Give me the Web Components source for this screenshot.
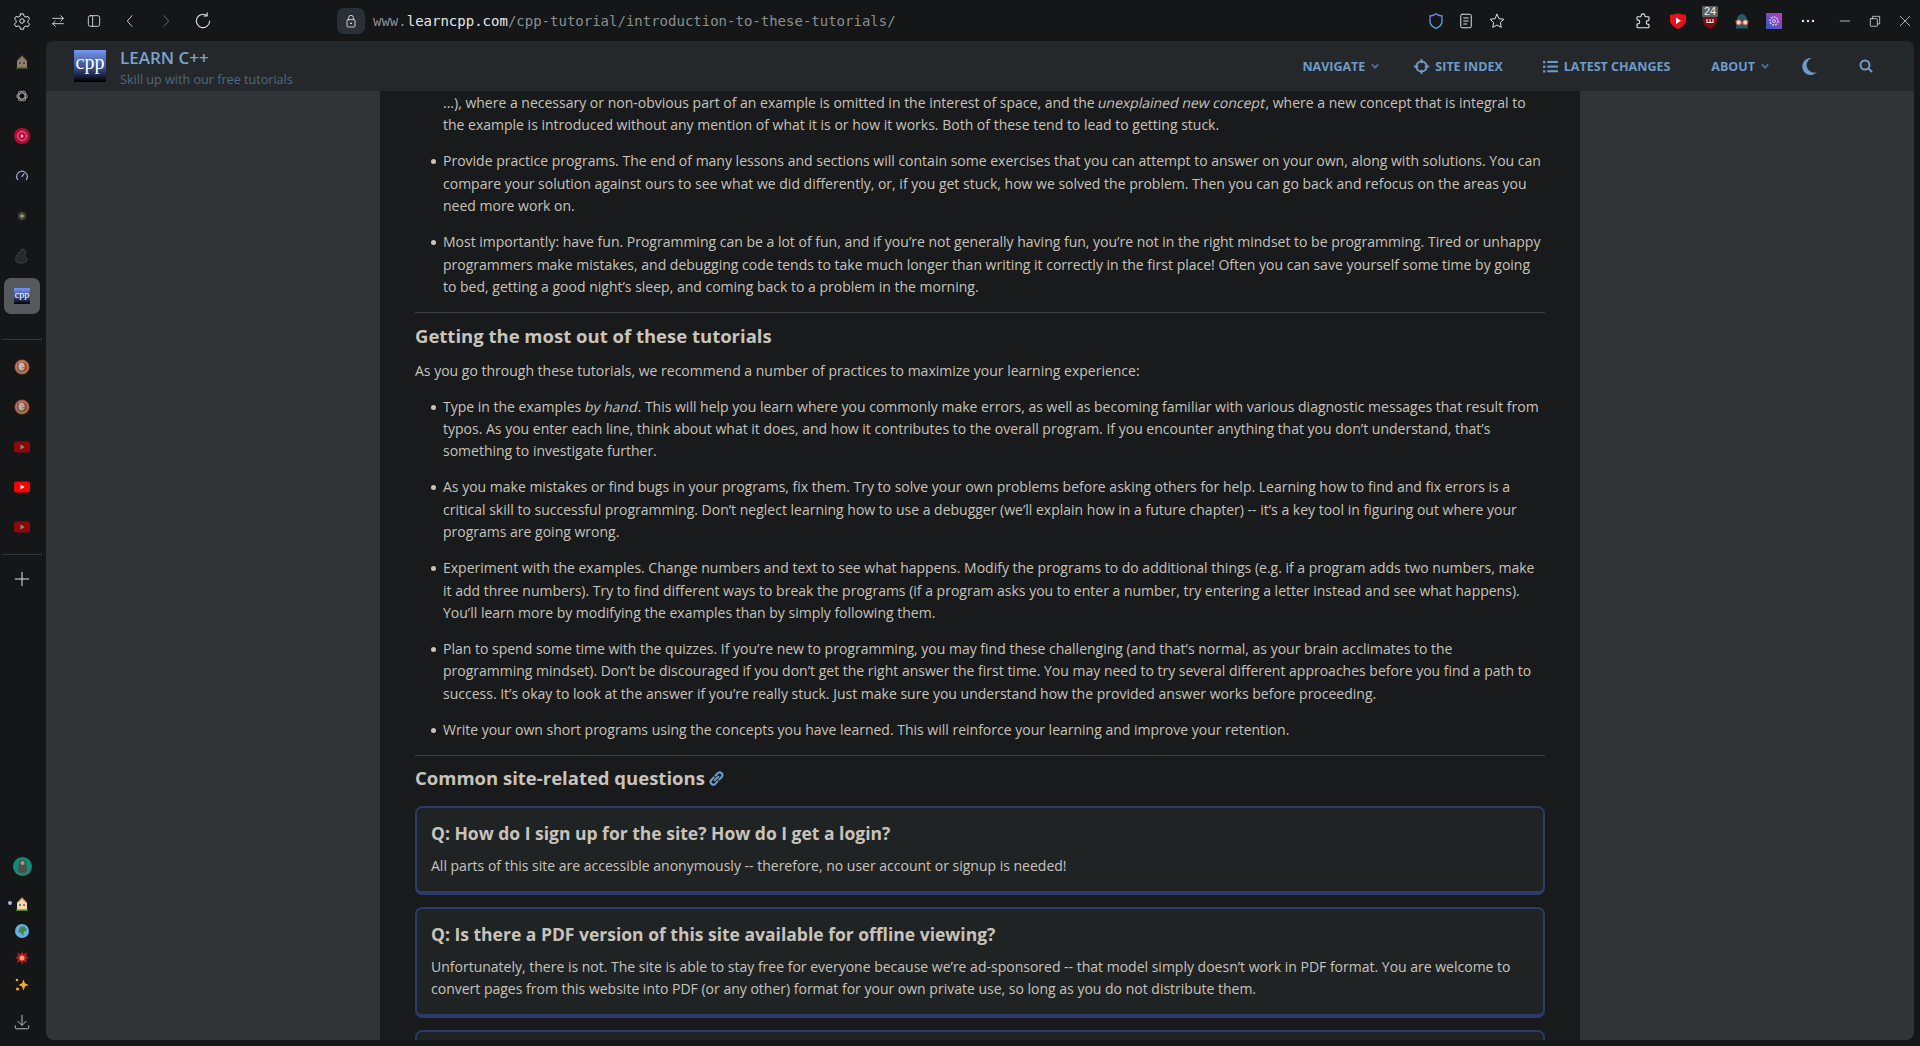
<!DOCTYPE html>
<html>
<head>
<meta charset="utf-8">
<title>Introduction to these tutorials</title>
<style>
html, body { margin: 0; height: 100%; overflow: hidden; background: #141617; }
body { font-family: "Open Sans", "Noto Sans", sans-serif; }
</style>
</head>
<body>
<browser-window>
    <browser-toolbar slot="toolbar"></browser-toolbar>
    <side-rail slot="rail"></side-rail>
    <site-header slot="header"></site-header>
    <tut-article>
        <tut-item continued>...), where a necessary or non-obvious part of an example is omitted in the interest of space, and the <tut-em>unexplained new concept</tut-em>, where a new concept that is integral to the example is introduced without any mention of what it is or how it works. Both of these tend to lead to getting stuck.</tut-item>
        <tut-item>Provide practice programs. The end of many lessons and sections will contain some exercises that you can attempt to answer on your own, along with solutions. You can compare your solution against ours to see what we did differently, or, if you get stuck, how we solved the problem. Then you can go back and refocus on the areas you need more work on.</tut-item>
        <tut-item>Most importantly: have fun. Programming can be a lot of fun, and if you’re not generally having fun, you’re not in the right mindset to be programming. Tired or unhappy programmers make mistakes, and debugging code tends to take much longer than writing it correctly in the first place! Often you can save yourself some time by going to bed, getting a good night’s sleep, and coming back to a problem in the morning.</tut-item>
        <tut-heading>Getting the most out of these tutorials</tut-heading>
        <tut-para>As you go through these tutorials, we recommend a number of practices to maximize your learning experience:</tut-para>
        <tut-item>Type in the examples <tut-em>by hand</tut-em>. This will help you learn where you commonly make errors, as well as becoming familiar with various diagnostic messages that result from typos. As you enter each line, think about what it does, and how it contributes to the overall program. If you encounter anything that you don’t understand, that’s something to investigate further.</tut-item>
        <tut-item>As you make mistakes or find bugs in your programs, fix them. Try to solve your own problems before asking others for help. Learning how to find and fix errors is a critical skill to successful programming. Don’t neglect learning how to use a debugger (we’ll explain how in a future chapter) -- it’s a key tool in figuring out where your programs are going wrong.</tut-item>
        <tut-item>Experiment with the examples. Change numbers and text to see what happens. Modify the programs to do additional things (e.g. if a program adds two numbers, make it add three numbers). Try to find different ways to break the programs (if a program asks you to enter a number, try entering a letter instead and see what happens). You’ll learn more by modifying the examples than by simply following them.</tut-item>
        <tut-item>Plan to spend some time with the quizzes. If you’re new to programming, you may find these challenging (and that’s normal, as your brain acclimates to the programming mindset). Don’t be discouraged if you don’t get the right answer the first time. You may need to try several different approaches before you find a path to success. It’s okay to look at the answer if you’re really stuck. Just make sure you understand how the provided answer works before proceeding.</tut-item>
        <tut-item>Write your own short programs using the concepts you have learned. This will reinforce your learning and improve your retention.</tut-item>
        <tut-heading anchor>Common site-related questions</tut-heading>
        <qa-card question="Q: How do I sign up for the site? How do I get a login?">All parts of this site are accessible anonymously -- therefore, no user account or signup is needed!</qa-card>
        <qa-card question="Q: Is there a PDF version of this site available for offline viewing?">Unfortunately, there is not. The site is able to stay free for everyone because we’re ad-sponsored -- that model simply doesn’t work in PDF format. You are welcome to convert pages from this website into PDF (or any other) format for your own private use, so long as you do not distribute them.</qa-card>
        <qa-card></qa-card>
    </tut-article>
</browser-window>

<script>
const FONT = '"Open Sans", "Noto Sans", sans-serif';

// stroke icon helper, everything in the chrome is a 1.3px outline
const line = (size, body, color = "#e4e4e4", sw = 1.3) => `<svg width="${size}" height="${size}" viewBox="0 0 24 24" fill="none" stroke="${color}" stroke-width="${sw}" stroke-linecap="round" stroke-linejoin="round">${body}</svg>`;

const ICONS = {
    gear: '<circle cx="12" cy="12" r="3"/><path d="M10 2.5h4l.7 3 2.4 1.3 3-.9 2 3.4-2.2 2.1v2.6l2.2 2.2-2 3.4-3-.9-2.4 1.3-.7 3h-4l-.7-3-2.4-1.3-3 .9-2-3.4 2.2-2.2v-2.6L2 9.3l2-3.4 3 .9 2.4-1.3z"/>',
    swap: '<path d="M4 8h16M16 4l4 4-4 4M20 16H4M8 12l-4 4 4 4"/>',
    panel: '<rect x="3.5" y="4" width="17" height="16" rx="3"/><path d="M10 4v16"/>',
    back: '<path d="M15 4l-7 8 7 8"/>',
    forward: '<path d="M9 4l7 8-7 8"/>',
    reload: '<path d="M20 12a8 8 0 1 1-3-6.3M17 2v4h-4"/>',
    lock: '<rect x="6" y="10" width="12" height="11" rx="1.5"/><path d="M8.5 10V7a3.5 3.5 0 0 1 7 0v3"/><circle cx="12" cy="15.5" r=".8" fill="#e4e4e4"/>',
    reader: '<rect x="5" y="3" width="14" height="18" rx="2"/><path d="M9 8h6M9 12h6M9 16h4"/>',
    star: '<path d="M12 3l2.800 5.900 6.400.8-4.700 4.400 1.200 6.400-5.700-3.100-5.700 3.100 1.200-6.400-4.700-4.400 6.400-.8z"/>',
    puzzle: '<path d="M9.500 5a2.500 2.500 0 0 1 5 0c0 .8.5 1.300 1.200 1.300H19a1 1 0 0 1 1 1v3c0 .7-.5 1.200-1.200 1.200a2.500 2.500 0 0 0 0 5c.7 0 1.200.5 1.200 1.200V20a1 1 0 0 1-1 1H5a1 1 0 0 1-1-1v-3c0-.7.5-1.200 1.200-1.200a2.500 2.500 0 0 0 0-5c-.7 0-1.200-.5-1.200-1.200V7.300a1 1 0 0 1 1-1h3.300c.7 0 1.200-.5 1.200-1.300z"/>',
    plus: '<path d="M12 3v18M3 12h18"/>',
    download: '<path d="M12 3v13M6.500 11l5.500 5.500 5.500-5.500M3 17v2.500c0 1 .5 1.500 1.500 1.500h15c1 0 1.500-.5 1.500-1.500V17"/>'
};

// the favicons and extension badges are small coloured drawings
const cppLogo = (size, id) => `<svg width="${size}" height="${size}" viewBox="0 0 32 32"><defs><linearGradient id="${id}" x1="0" y1="0" x2="0" y2="1"><stop offset="0" stop-color="#7597f0"/><stop offset=".6" stop-color="#35467f"/><stop offset="1" stop-color="#000"/></linearGradient></defs><rect width="32" height="32" fill="url(#${id})"/><text x="16" y="19" text-anchor="middle" font-family="'Liberation Serif', serif" font-size="20" fill="#fff">cpp</text></svg>`;
const house = (size, dim) => `<svg width="${size}" height="${size}" viewBox="0 0 16 16" style="opacity:${dim}"><path d="M8 1.500l5 5V14H3V6.500z" fill="#f2d9a8"/><path d="M8 1.500l5 5h-1.500L8 3 4.500 6.500H3z" fill="#c9895a"/><rect x="5" y="8" width="2" height="2" fill="#4a86d8"/><rect x="9" y="8" width="2" height="2" fill="#e05050"/><rect x="2" y="13.500" width="12" height="1.500" fill="#4f7a30"/></svg>`;
const duck = (dim) => `<svg width="16" height="16" viewBox="0 0 16 16" style="opacity:${dim}"><circle cx="8" cy="8" r="7.500" fill="#d5603a"/><circle cx="8" cy="8" r="6" fill="none" stroke="#f4ddd4" stroke-width=".8"/><ellipse cx="7.500" cy="7.500" rx="3" ry="4" fill="#eee"/><path d="M8 8h3v1.400H8z" fill="#e8a530"/><path d="M6 11.500h4l-1 2H7z" fill="#5aa845"/></svg>`;
const yt = (dim) => `<svg width="16" height="12" viewBox="0 0 16 12" style="opacity:${dim}"><rect width="16" height="11" y=".5" rx="2.500" fill="#f00"/><path d="M6.500 3.500l4 2.500-4 2.500z" fill="#fff"/></svg>`;

const RAIL_ITEMS = [
    [34, house(16, .55)],
    [34, `<svg width="16" height="16" viewBox="0 0 24 24" fill="none" stroke="#9a9a9a" stroke-width="1.600"><circle cx="12" cy="12" r="11" fill="#0e0e0e" stroke="none"/><ellipse cx="12" cy="12" rx="8" ry="4.500"/><ellipse cx="12" cy="12" rx="8" ry="4.500" transform="rotate(60 12 12)"/><ellipse cx="12" cy="12" rx="8" ry="4.500" transform="rotate(120 12 12)"/></svg>`],
    [3, ""],
    [40, `<svg width="16" height="16" viewBox="0 0 16 16"><circle cx="8" cy="8" r="8" fill="#b70c38"/><circle cx="8" cy="8" r="4.500" fill="none" stroke="#e88ba4" stroke-width=".9"/><path d="M6.800 5.800l3.200 2.200-3.200 2.200z" fill="#e8c0cc"/></svg>`],
    [40, `<svg width="14" height="14" viewBox="0 0 16 16" fill="none" stroke="#a9a9c0" stroke-width="1.400" stroke-linecap="round"><circle cx="8" cy="8" r="8" fill="#181a26" stroke="none"/><path d="M3 12a6 6 0 1 1 10 0M8 8.500l2.200-3"/></svg>`],
    [40, `<svg width="8" height="8" viewBox="0 0 8 8"><circle cx="4" cy="4" r="4" fill="#4a4433"/><circle cx="4" cy="4" r="1.800" fill="#9a9a8a"/></svg>`],
    [40, `<svg width="14" height="16" viewBox="0 0 14 16" fill="#26292c" stroke="#44474a" stroke-width=".8"><path d="M1 13c-1-4 1-7 4-9l2-3 3 1 1 3-2 2 3 4c0 3-2 4-5 4s-5 0-6-2z"/></svg>`],
    [40, cppLogo(16, "cr"), true],
];
const RAIL_DUCKS = [
    [40, duck(.75)],
    [40, duck(.7)],
    [40, yt(.5)],
    [40, yt(1)],
    [40, yt(.5)],
];
const RAIL_BOTTOM = [
    [36, `<svg width="19" height="19" viewBox="0 0 19 19"><circle cx="9.500" cy="9.500" r="9.500" fill="#148a78"/><path d="M6 5c1-3 6-3 7 0l1 9c-1 3-8 3-9 0z" fill="#4b4f48"/><circle cx="9.500" cy="6" r="2" fill="#a89a88"/></svg>`],
    [6, ""],
    [27, house(16, 1), false, true],
    [27, `<svg width="14" height="14" viewBox="0 0 14 14"><circle cx="7" cy="7" r="7" fill="#6aaee8"/><path d="M5 3l4-1 3 4-3 2-1 4-2-3-3-1z" fill="#3f8a45"/></svg>`],
    [27, `<svg width="14" height="14" viewBox="0 0 14 14"><path d="M7 0l1.500 3.500L12 1l-1 4 3 2-3 1 1 4-3.500-2L7 14 5.500 10 2 12l1-4-3-1 3-2-1-4 3.500 2.500z" fill="#b8182c"/><circle cx="7" cy="7" r="2.500" fill="#f2a84a"/></svg>`],
    [27, `<svg width="14" height="14" viewBox="0 0 14 14" fill="#f4a92c"><path d="M8.500 1.500l1.500 3.700L13.500 7 10 8.500l-1.500 4-1.500-4L3.500 7 7 5.200z"/><circle cx="2" cy="2" r="1.300"/><circle cx="2.500" cy="11" r="1.600"/></svg>`],
];

class BrowserWindow extends HTMLElement {
    constructor() {
        super();
        this.attachShadow({ mode: "open" }).innerHTML = `
            <style>
            :host { display: grid; grid-template-columns: 46px 1fr; grid-template-rows: 41px 1005px; height: 1046px; background: #141617; color: #c8c3bc; }
            .bar { grid-column: 1 / 3; }
            .panel { display: grid; grid-template-columns: 334px 1200px 334px; grid-template-rows: 50px 949px; border-radius: 8px; overflow: hidden; background: #303437; margin: 0 6px 6px 0; min-height: 0; }
            .head { grid-column: 1 / 4; }
            .main { grid-column: 2; background: #181a1b; overflow: hidden; min-height: 0; }
            </style>
            <div class="bar"><slot name="toolbar"></slot></div>
            <slot name="rail"></slot>
            <div class="panel">
                <div class="head"><slot name="header"></slot></div>
                <div class="main"><slot></slot></div>
            </div>`;
    }
}

class BrowserToolbar extends HTMLElement {
    constructor() {
        super();
        const btn = (name, w = 36, color, sw, size = 16) => `<span class="b" style="width:${w}px">${line(size, ICONS[name], color, sw)}</span>`;
        this.attachShadow({ mode: "open" }).innerHTML = `
            <style>
            :host { display: flex; align-items: center; height: 41px; padding-left: 4px; box-sizing: border-box; }
            .b { display: flex; justify-content: center; align-items: center; height: 26px; flex: none; }
            .lock { width: 28px; height: 26px; margin-left: 115px; background: #2a3038; border-radius: 7px; display: flex; align-items: center; justify-content: center; }
            .url { font: 14px "DejaVu Sans Mono", monospace; color: #8b8f92; margin-left: 8px; white-space: nowrap; }
            .url b { font-weight: 400; color: #e8e8e8; }
            .fill { flex: 1; }
            .ext { position: relative; width: 32px; display: flex; justify-content: center; align-items: center; flex: none; }
            .count { position: absolute; top: -7px; left: 8px; background: #5c5f62; color: #eee; font: 11px/11px "Liberation Sans", sans-serif; padding: 0 2px; border-radius: 1px; }
            .win { width: 30px; display: flex; justify-content: center; flex: none; }
            </style>
            ${btn("gear", 36, undefined, undefined, 18)}${btn("swap")}${btn("panel")}${btn("back")}${btn("forward", 36, "#6e7072")}${btn("reload", 38, undefined, undefined, 20)}
            <span class="lock">${line(16, ICONS.lock)}</span>
            <span class="url">www.<b>learncpp.com</b>/cpp-tutorial/introduction-to-these-tutorials/</span>
            <span style="width:525px;flex:none"></span>
            <span class="b" style="width:30px"><svg width="18" height="18" viewBox="0 0 24 24" fill="none" stroke="url(#sg)" stroke-width="1.800"><defs><linearGradient id="sg" x1="0" y1="0" x2="0" y2="1"><stop offset="0" stop-color="#7a78e0"/><stop offset="1" stop-color="#3fb4ec"/></linearGradient></defs><path d="M12 2.500c2.500 1.700 5 2.500 8 2.800v7c0 4.300-3.200 7.500-8 9.500-4.800-2-8-5.200-8-9.500v-7c3-.3 5.500-1.100 8-2.800z"/></svg></span>
            ${btn("reader", 30, undefined, undefined, 18)}${btn("star", 32, undefined, undefined, 18)}
            <span class="fill"></span>
            ${btn("puzzle", 32, undefined, 1.500, 18)}
            <span style="width:3px;flex:none"></span>
            <span class="ext"><svg width="16" height="16" viewBox="0 0 16 16"><path d="M8 0c2 1.200 5 1.500 8 1.800V7c0 4-3.500 7-8 9-4.500-2-8-5-8-9V1.800C3 1.500 6 1.200 8 0z" fill="#e8101c"/><path d="M6 4.500l5 3.300-5 3.300z" fill="#fff"/></svg></span>
            <span class="ext"><svg width="14" height="16" viewBox="0 0 14 16"><path d="M7 0l7 2v6c0 3.500-3 6.200-7 8-4-1.800-7-4.500-7-8V2z" fill="#7c0d10"/><path d="M4 6v3.500h6V6M7 6v3.500" fill="none" stroke="#eee" stroke-width="1.100"/></svg><span class="count">24</span></span>
            <span class="ext"><svg width="16" height="18" viewBox="0 0 17 18"><path d="M3 9c0-10 11-10 11 0l1 8H2z" fill="#1f5a68"/><rect x="1" y="8" width="15" height="2" fill="#3a3a3a"/><circle cx="5" cy="10.500" r="2.800" fill="#e8d8c8" stroke="#c8402c"/><circle cx="12" cy="10.500" r="2.800" fill="#e8d8c8" stroke="#c8402c"/></svg></span>
            <span class="ext"><svg width="16" height="16" viewBox="0 0 16 16"><defs><linearGradient id="pg" x1="1" y1="0" x2="0" y2="1"><stop offset="0" stop-color="#c03ab8"/><stop offset="1" stop-color="#2b5cc0"/></linearGradient></defs><rect width="16" height="16" fill="url(#pg)"/><circle cx="8" cy="8" r="4" fill="none" stroke="#d8c8f0" stroke-width="1.400" stroke-dasharray="2 1"/><circle cx="8" cy="8" r="1.500" fill="none" stroke="#d8c8f0"/></svg></span>
            <span class="ext" style="width:36px"><svg width="14" height="4" viewBox="0 0 14 4" fill="#e4e4e4"><circle cx="2" cy="2" r="1.200"/><circle cx="7" cy="2" r="1.200"/><circle cx="12" cy="2" r="1.200"/></svg></span>
            <span style="width:4px;flex:none"></span>
            <span class="win">${line(14, '<path d="M4 12h16"/>')}</span>
            <span class="win">${line(14, '<rect x="4" y="8" width="12" height="13" rx="1"/><path d="M8 8V4h12v13h-4"/>')}</span>
            <span class="win">${line(14, '<path d="M4 4l16 16M20 4L4 20"/>')}</span>`;
    }
}

class SideRail extends HTMLElement {
    constructor() {
        super();
        const item = ([h, svg, active, dot]) => `<div class="it" style="height:${h}px">${active ? '<span class="on"></span>' : ""}${dot ? '<span class="dot"></span>' : ""}${svg}</div>`;
        this.attachShadow({ mode: "open" }).innerHTML = `
            <style>
            :host { display: flex; flex-direction: column; width: 46px; padding: 4px 2px 0 0; box-sizing: border-box; height: 999px; }
            .it { position: relative; display: flex; align-items: center; justify-content: center; flex: none; }
            .it svg { position: relative; }
            .on { position: absolute; left: 4px; top: 2px; width: 36px; height: 36px; border-radius: 7px; background: #56595b; }
            .dot { position: absolute; left: 8px; top: 11px; width: 4px; height: 4px; border-radius: 50%; background: #9db8f4; }
            .sep { height: 1px; background: #33363a; margin: 23px 2px 7px; flex: none; }
            .sep.low { margin: 7px 2px 0; }
            .add { height: 48px; display: flex; align-items: center; justify-content: center; flex: none; }
            .fill { flex: 1; }
            .dl { height: 42px; box-sizing: border-box; padding-bottom: 9px; display: flex; align-items: flex-end; justify-content: center; flex: none; }
            </style>
            ${RAIL_ITEMS.map(item).join("")}
            <div class="sep"></div>
            ${RAIL_DUCKS.map(item).join("")}
            <div class="sep low"></div>
            <div class="add">${line(18, ICONS.plus, "#e8e8e8")}</div>
            <div class="fill"></div>
            ${RAIL_BOTTOM.map(item).join("")}
            <div class="dl">${line(18, ICONS.download, "#c0c0c0")}</div>`;
    }
}

class SiteHeader extends HTMLElement {
    constructor() {
        super();
        const caret = '<svg class="c" width="8" height="6" viewBox="0 0 10 6" fill="none" stroke="#4f7196" stroke-width="2.400"><path d="M1 1l4 4 4-4"/></svg>';
        this.attachShadow({ mode: "open" }).innerHTML = `
            <style>
            :host { display: flex; align-items: center; height: 50px; background: #24282a; font-family: ${FONT}; padding-left: 28px; box-sizing: border-box; }
            .logo { margin-right: 14px; display: flex; }
            .txt { padding-top: 5px; }
            .name { font-size: 17px; font-weight: 600; color: #78a3d2; line-height: 22px; }
            .tag { font-size: 12.6px; color: #4f6980; line-height: 20px; margin-top: 1px; }
            nav { margin-left: auto; display: flex; align-items: center; color: #6e9bcb; font-size: 12.5px; font-weight: 700; padding-right: 41px; }
            a { display: flex; align-items: center; gap: 6px; white-space: nowrap; }
            </style>
            <span class="logo">${cppLogo(32, "hl")}</span>
            <div class="txt"><div class="name">LEARN C++</div><div class="tag">Skill up with our free tutorials</div></div>
            <nav>
                <a>NAVIGATE ${caret}</a>
                <a style="margin-left:35px"><svg width="15" height="15" viewBox="0 0 16 16" fill="none" stroke="#6e9bcb" stroke-width="2"><circle cx="8" cy="8" r="5.500"/><path d="M8 0v4.500M8 11.500V16M0 8h4.500M11.500 8H16"/></svg>SITE INDEX</a>
                <a style="margin-left:40px"><svg width="15" height="13" viewBox="0 0 16 14" fill="#6e9bcb"><rect y="1" width="2.500" height="2.500"/><rect y="6" width="2.500" height="2.500"/><rect y="11" width="2.500" height="2.500"/><rect x="4.500" y="1" width="11.500" height="2.200"/><rect x="4.500" y="6" width="11.500" height="2.200"/><rect x="4.500" y="11" width="11.500" height="2.200"/></svg>LATEST CHANGES</a>
                <a style="margin-left:41px">ABOUT ${caret}</a>
                <svg style="margin-left:33px" width="15" height="17" viewBox="0 0 14 16" fill="#6e9bcb"><path d="M9 0a8 8 0 1 0 5 13.500A7 7 0 0 1 9 0z"/></svg>
                <svg style="margin-left:42px" width="14" height="14" viewBox="0 0 14 14" fill="none" stroke="#6e9bcb" stroke-width="2"><circle cx="6" cy="6" r="4.500"/><path d="M9.500 9.500L13 13"/></svg>
            </nav>`;
    }
}

class TutArticle extends HTMLElement {
    constructor() {
        super();
        this.attachShadow({ mode: "open" }).innerHTML = `
            <style>
            :host { display: block; padding: 1px 35px 0; font: 14px/22.4px ${FONT}; color: #c8c3bc; }
            </style>
            <slot></slot>`;
    }
}

// the site's italics are a slanted regular face, so keep upright widths
class TutEm extends HTMLElement {
    constructor() {
        super();
        this.attachShadow({ mode: "open" }).innerHTML = `
            <style>:host { display: inline-block; transform: skewX(-12deg); }</style>
            <slot></slot>`;
    }
}

class TutItem extends HTMLElement {
    constructor() {
        super();
        this.attachShadow({ mode: "open" }).innerHTML = `
            <style>
            :host { display: grid; grid-template-columns: 28px 1fr; margin-bottom: 13.6px; }
            .m { width: 5px; height: 5px; border-radius: 50%; background: #c8c3bc; margin: 9px 0 0 16px; }
            :host([continued]) .m { visibility: hidden; }
            </style>
            <span class="m"></span>
            <div><slot></slot></div>`;
    }
}

class TutPara extends HTMLElement {
    constructor() {
        super();
        this.attachShadow({ mode: "open" }).innerHTML = `
            <style>:host { display: block; margin-bottom: 13.6px; }</style>
            <slot></slot>`;
    }
}

class TutHeading extends HTMLElement {
    constructor() {
        super();
        const link = this.hasAttribute("anchor") ? '<svg width="15" height="15" viewBox="0 0 16 16" fill="none" stroke="#6a9fd8" stroke-width="2.200" stroke-linecap="round"><path d="M7 5l2-2.500a3 3 0 0 1 4.500 4L11 9"/><path d="M9 11l-2 2.500a3 3 0 0 1-4.500-4L5 7"/><path d="M6 10l4-4"/></svg>' : "";
        this.attachShadow({ mode: "open" }).innerHTML = `
            <style>
            :host { display: block; border-top: 1px solid #3a3e41; padding-top: 7.500px; margin-bottom: 9px; }
            :host([anchor]) { margin-bottom: 12.500px; }
            h2 { margin: 0; font-size: 18.5px; line-height: 30px; font-weight: 700; display: flex; align-items: center; gap: 4px; color: #c8c3bc; }
            </style>
            <h2><span><slot></slot></span>${link}</h2>`;
    }
}

class QaCard extends HTMLElement {
    constructor() {
        super();
        const q = this.getAttribute("question");
        this.attachShadow({ mode: "open" }).innerHTML = `
            <style>
            :host { display: block; margin-bottom: 12px; background: #202324; border: 2px solid #2b3a6b; border-bottom-width: 4px; border-radius: 7px; padding: 12px 14px 13.500px; }
            h3 { margin: 0 0 9px; font-size: 17.500px; line-height: 26px; font-weight: 700; color: #c8c3bc; }
            </style>
            ${q ? `<h3>${q}</h3>` : ""}
            <div><slot></slot></div>`;
    }
}

customElements.define("browser-window", BrowserWindow);
customElements.define("browser-toolbar", BrowserToolbar);
customElements.define("side-rail", SideRail);
customElements.define("site-header", SiteHeader);
customElements.define("tut-article", TutArticle);
customElements.define("tut-em", TutEm);
customElements.define("tut-item", TutItem);
customElements.define("tut-para", TutPara);
customElements.define("tut-heading", TutHeading);
customElements.define("qa-card", QaCard);
</script>
</body>
</html>
